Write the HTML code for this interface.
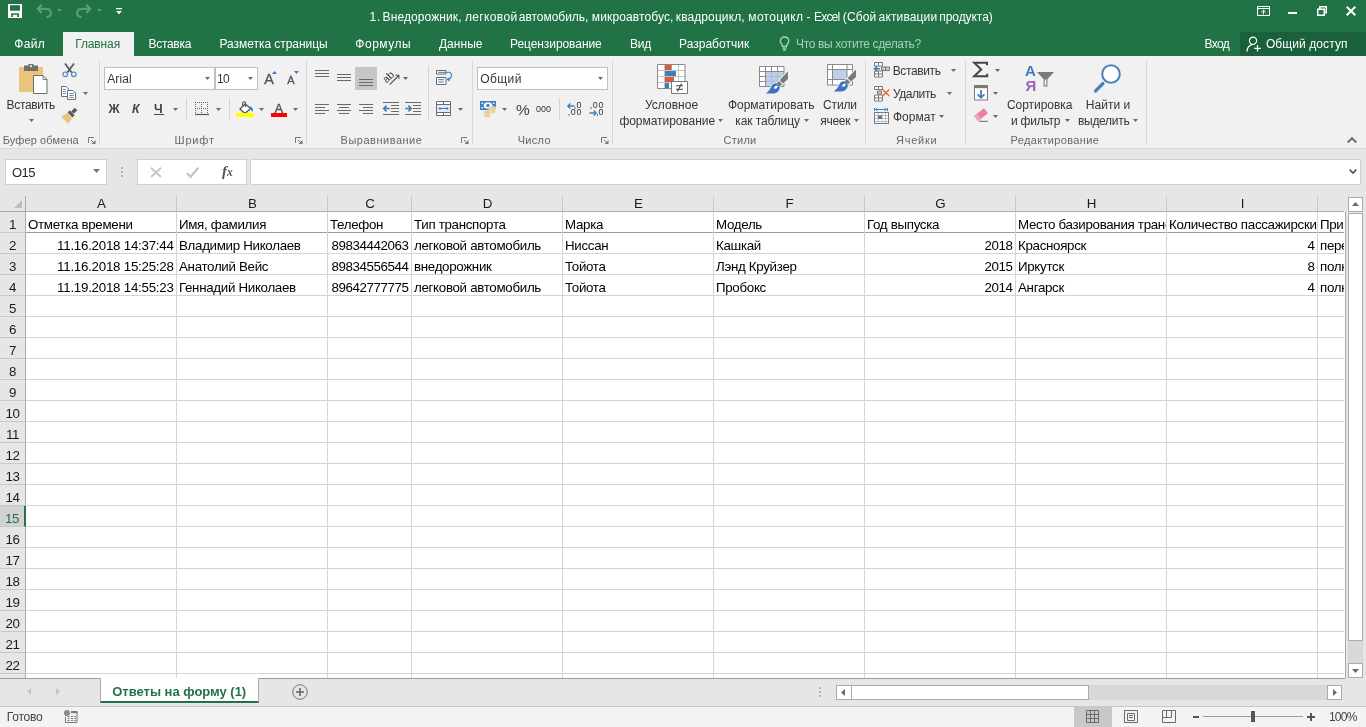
<!DOCTYPE html>
<html lang="ru"><head><meta charset="utf-8"><title>Excel</title>
<style>
*{box-sizing:border-box;margin:0;padding:0}
html,body{width:1366px;height:727px;overflow:hidden;background:#e6e6e6}
body{font-family:"Liberation Sans",sans-serif;font-size:12px;color:#262626;position:relative}
.abs{position:absolute}
#title{position:absolute;left:0;top:0;width:1366px;height:56px;background:#217346}
#title .ttl{position:absolute;left:0;width:1366px;top:9px;text-align:center;color:#fff;font-size:12.4px;line-height:16px;white-space:nowrap;padding-left:0}
.tab{position:absolute;top:32px;height:24px;line-height:24px;color:#fff;font-size:12.6px;white-space:nowrap}
.tab.act{background:#f1f1f1;color:#217346;text-align:center}
#ribbon{position:absolute;left:0;top:56px;width:1366px;height:93px;background:#f1f1f1;border-bottom:1px solid #d9d9d9}
.gl{position:absolute;top:131px;font-size:12px;color:#5e5e5e;white-space:nowrap;line-height:16px;transform:translateX(-50%)}
.gsep{position:absolute;top:60px;width:1px;height:84px;background:#d8d8d8}
.rt{position:absolute;font-size:12.4px;color:#262626;white-space:nowrap;line-height:16px}
.rtc{transform:translateX(-50%);text-align:center}
.dd{position:absolute;width:0;height:0;border-left:3px solid transparent;border-right:3px solid transparent;border-top:3px solid #6a6a6a}
.launch{position:absolute;width:8px;height:8px}
.combo{position:absolute;background:#fff;border:1px solid #c0c0c0;height:23px;font-size:12.4px;line-height:20px;padding-left:3px;color:#262626}
/* formula bar */
.nbox{position:absolute;background:#fff;border:1px solid #d0d0d0}
/* sheet */
#sheet{position:absolute;left:0;top:0;width:1366px;height:727px;pointer-events:none}
.corner{position:absolute;left:0;top:196px;width:26px;height:16px;border-right:1px solid #ababab;border-bottom:1px solid #ababab;background:#e6e6e6}
.corner svg{position:absolute;left:14px;top:4px}
.ch{position:absolute;top:196px;height:16px;background:#e6e6e6;border-right:1px solid #c8c8c8;border-bottom:1px solid #ababab;text-align:center;font-size:13.33px;line-height:16px;color:#1a1a1a;padding-left:1px}
.rh{position:absolute;left:0;width:26px;height:21px;border-right:1px solid #ababab;border-bottom:1px solid #c8c8c8;background:#e6e6e6;text-align:center;font-size:13.33px;line-height:26px;color:#1a1a1a;letter-spacing:-0.4px;overflow:hidden}
.rh.sel{background:#d2d2d2;color:#217346;border-right:2px solid #217346}
.rhb{position:absolute;left:0;width:26px;height:4px;background:#e6e6e6;border-right:1px solid #ababab}
#cells{position:absolute;left:0;top:0;width:1366px;height:727px}
#cells::before{content:"";position:absolute;left:26px;top:212px;width:1319px;height:466px;background:#fff;border-right:1px solid #ababab}
.hl{position:absolute;left:26px;width:1318px;height:1px;background:#d4d4d4}
.hl.fr{background:#9b9b9b}
.vl{position:absolute;top:212px;width:1px;height:466px;background:#d4d4d4}
.c{position:absolute;height:20px;line-height:25px;font-size:13.33px;color:#000;white-space:nowrap;overflow:hidden;padding:0 2px 0 2px;letter-spacing:-0.31px}
.c.n{letter-spacing:-0.43px;padding-right:2.6px}
.c.d{letter-spacing:-0.25px;padding-right:2.4px}
.c.r{text-align:right}
/* bottom */
#tabbar{position:absolute;left:0;top:678px;width:1366px;height:28px;background:#e6e6e6}
#status{position:absolute;left:0;top:706px;width:1366px;height:21px;background:#f3f3f3;border-top:1px solid #c8c8c8}
.t{position:absolute;white-space:nowrap}
.i{position:absolute;overflow:visible}
#app{position:absolute;left:0;top:0;width:1366px;height:727px;overflow:hidden;will-change:transform}

</style></head>
<body>
<div id="app">
<div id="title"></div>
<div class="abs" style="left:63px;top:32px;width:71px;height:24px;background:#f1f1f1"></div>
<div class="abs" style="left:1240px;top:32px;width:126px;height:24px;background:#1a603a"></div>
<div class="t" style="left:369.59px;top:9.00px;font-size:12px;line-height:16px;letter-spacing:0.802px;color:#ffffff;">1.</div>
<div class="t" style="left:382.62px;top:9.00px;font-size:12px;line-height:16px;letter-spacing:0.090px;color:#ffffff;">Внедорожник,</div>
<div class="t" style="left:464.94px;top:9.00px;font-size:12px;line-height:16px;letter-spacing:0.353px;color:#ffffff;">легковой</div>
<div class="t" style="left:518.79px;top:9.00px;font-size:12px;line-height:16px;letter-spacing:-0.032px;color:#ffffff;">автомобиль,</div>
<div class="t" style="left:591.87px;top:9.00px;font-size:12px;line-height:16px;letter-spacing:0.111px;color:#ffffff;">микроавтобус,</div>
<div class="t" style="left:675.79px;top:9.00px;font-size:12px;line-height:16px;letter-spacing:0.098px;color:#ffffff;">квадроцикл,</div>
<div class="t" style="left:748.37px;top:9.00px;font-size:12px;line-height:16px;letter-spacing:0.277px;color:#ffffff;">мотоцикл</div>
<div class="t" style="left:806.47px;top:9.00px;font-size:12px;line-height:16px;letter-spacing:1.270px;color:#ffffff;">-</div>
<div class="t" style="left:814.12px;top:9.00px;font-size:12px;line-height:16px;letter-spacing:-0.839px;color:#ffffff;">Excel</div>
<div class="t" style="left:842.76px;top:9.00px;font-size:12px;line-height:16px;letter-spacing:0.141px;color:#ffffff;">(Сбой</div>
<div class="t" style="left:878.59px;top:9.00px;font-size:12px;line-height:16px;letter-spacing:0.136px;color:#ffffff;">активации</div>
<div class="t" style="left:939.27px;top:9.00px;font-size:12px;line-height:16px;letter-spacing:-0.061px;color:#ffffff;">продукта)</div>
<div class="t" style="left:14.31px;top:36.00px;font-size:12px;line-height:16px;letter-spacing:0.340px;color:#ffffff;">Файл</div>
<div class="t" style="left:148.52px;top:36.00px;font-size:12px;line-height:16px;letter-spacing:-0.298px;color:#ffffff;">Вставка</div>
<div class="t" style="left:219.52px;top:36.00px;font-size:12px;line-height:16px;letter-spacing:-0.045px;color:#ffffff;">Разметка страницы</div>
<div class="t" style="left:355.31px;top:36.00px;font-size:12px;line-height:16px;letter-spacing:0.529px;color:#ffffff;">Формулы</div>
<div class="t" style="left:438.91px;top:36.00px;font-size:12px;line-height:16px;letter-spacing:0.054px;color:#ffffff;">Данные</div>
<div class="t" style="left:510.02px;top:36.00px;font-size:12px;line-height:16px;letter-spacing:-0.072px;color:#ffffff;">Рецензирование</div>
<div class="t" style="left:630.02px;top:36.00px;font-size:12px;line-height:16px;letter-spacing:-0.260px;color:#ffffff;">Вид</div>
<div class="t" style="left:679.02px;top:36.00px;font-size:12px;line-height:16px;letter-spacing:0.015px;color:#ffffff;">Разработчик</div>
<div class="t" style="left:1204.52px;top:36.00px;font-size:12px;line-height:16px;letter-spacing:-0.663px;color:#ffffff;">Вход</div>
<div class="t" style="left:1265.93px;top:36.00px;font-size:12px;line-height:16px;letter-spacing:0.083px;color:#ffffff;">Общий доступ</div>
<div class="t" style="left:75.22px;top:36.00px;font-size:12px;line-height:16px;letter-spacing:-0.122px;color:#217346;">Главная</div>
<div class="t" style="left:796.06px;top:36.00px;font-size:12px;line-height:16px;letter-spacing:-0.362px;color:#a6d0b9;">Что вы хотите сделать?</div>
<svg class="i" style="left:8px;top:4px" width="14" height="14" viewBox="0 0 14 14"><path d="M0 0H14V14H0Z" fill="#fff"/><path d="M2 1.2H12V6.7H2Z" fill="#217346"/><path d="M3.2 9.3H11V13H3.2Z" fill="#217346"/><path d="M5 10.8H9.2V13H5Z" fill="#fff"/></svg>
<svg class="i" style="left:36px;top:3px" width="16" height="15" viewBox="0 0 16 15"><path d="M5.7 1.7L1.7 5.7L5.7 9.7M2 5.7H9C13 5.7 15 7.7 15 10C15 12.2 13.5 13.7 10.5 14.2" fill="none" stroke="#5c9f7b" stroke-width="2"/></svg>
<svg class="i" style="left:57px;top:9px" width="5" height="3" viewBox="0 0 5 3"><path d="M0 0H5L2.5 3Z" fill="#5c9f7b"/></svg>
<svg class="i" style="left:76px;top:3px" width="16" height="15" viewBox="0 0 16 15"><path d="M10.3 1.7L14.3 5.7L10.3 9.7M14 5.7H7C3 5.7 1 7.7 1 10C1 12.2 2.5 13.7 5.5 14.2" fill="none" stroke="#5c9f7b" stroke-width="2"/></svg>
<svg class="i" style="left:97px;top:9px" width="5" height="3" viewBox="0 0 5 3"><path d="M0 0H5L2.5 3Z" fill="#5c9f7b"/></svg>
<svg class="i" style="left:116px;top:8px" width="6" height="7" viewBox="0 0 6 7"><path d="M0 0H6V1.3H0Z" fill="#fff"/><path d="M0 3H6L3 6.2Z" fill="#fff"/></svg>
<svg class="i" style="left:779px;top:36px" width="11" height="15" viewBox="0 0 11 15"><path d="M5.5 1C3 1 1.3 2.8 1.3 5C1.3 6.6 2.3 7.6 3 8.6C3.4 9.2 3.5 9.8 3.5 10.5H7.5C7.5 9.8 7.6 9.2 8 8.6C8.7 7.6 9.7 6.6 9.7 5C9.7 2.8 8 1 5.5 1Z" fill="none" stroke="#a6d0b9" stroke-width="1.4"/><path d="M3.4 12.2H7.6M3.9 14H7.1" stroke="#a6d0b9" stroke-width="1.3"/></svg>
<svg class="i" style="left:1257px;top:6px" width="13" height="10" viewBox="0 0 13 10"><path d="M0.5 0.5H12.5V9.5H0.5Z" fill="none" stroke="#fff" stroke-width="1"/><path d="M0.5 2.5H12.5" stroke="#fff" stroke-width="1"/><path d="M6.5 8.5V4.5M4.3 6.3L6.5 4.2L8.7 6.3" fill="none" stroke="#fff" stroke-width="1"/></svg>
<div class="abs" style="left:1288px;top:12px;width:9px;height:2px;background:#fff"></div>
<svg class="i" style="left:1317px;top:6px" width="10" height="10" viewBox="0 0 10 10"><path d="M0.75 3.25H7.25V9.25H0.75Z" fill="none" stroke="#fff" stroke-width="1.5"/><path d="M2.75 3V0.75H9.25V6.75H7.5" fill="none" stroke="#fff" stroke-width="1.5"/></svg>
<svg class="i" style="left:1346px;top:6px" width="10" height="10" viewBox="0 0 10 10"><path d="M0.7 0.7L9.3 9.3M9.3 0.7L0.7 9.3" stroke="#fff" stroke-width="2"/></svg>
<svg class="i" style="left:1246px;top:36px" width="16" height="16" viewBox="0 0 16 16"><circle cx="7" cy="4.8" r="3.6" fill="none" stroke="#fff" stroke-width="1.2"/><path d="M1 15.5C1.3 11.5 3.6 9.3 6 8.7" fill="none" stroke="#fff" stroke-width="1.2"/><path d="M11.5 9V15.5M8.2 12.3H14.8" stroke="#fff" stroke-width="1.2"/></svg>
<div id="ribbon"></div>
<div class="t" style="left:2.70px;top:132.00px;font-size:11px;line-height:16px;letter-spacing:0.114px;color:#666666;">Буфер обмена</div>
<div class="t" style="left:174.60px;top:132.00px;font-size:11px;line-height:16px;letter-spacing:0.790px;color:#666666;">Шрифт</div>
<div class="t" style="left:340.60px;top:132.00px;font-size:11px;line-height:16px;letter-spacing:0.505px;color:#666666;">Выравнивание</div>
<div class="t" style="left:517.64px;top:132.00px;font-size:11px;line-height:16px;letter-spacing:0.327px;color:#666666;">Число</div>
<div class="t" style="left:723.44px;top:132.00px;font-size:11px;line-height:16px;letter-spacing:0.283px;color:#666666;">Стили</div>
<div class="t" style="left:895.98px;top:132.00px;font-size:11px;line-height:16px;letter-spacing:0.777px;color:#666666;">Ячейки</div>
<div class="t" style="left:1010.60px;top:132.00px;font-size:11px;line-height:16px;letter-spacing:0.336px;color:#666666;">Редактирование</div>
<div class="gsep" style="left:99px"></div>
<div class="gsep" style="left:306px"></div>
<div class="gsep" style="left:472px"></div>
<div class="gsep" style="left:612px"></div>
<div class="gsep" style="left:865px"></div>
<div class="gsep" style="left:965px"></div>
<div class="gsep" style="left:1146px"></div>
<svg class="i" style="left:88px;top:137px" width="8" height="7" viewBox="0 0 8 7"><path d="M0.5 6V0.5H6" fill="none" stroke="#777" stroke-width="1"/><path d="M3 3L6.5 6.5" stroke="#777" stroke-width="1"/><path d="M7.5 3V7H3.5Z" fill="#777"/></svg>
<svg class="i" style="left:295px;top:137px" width="8" height="7" viewBox="0 0 8 7"><path d="M0.5 6V0.5H6" fill="none" stroke="#777" stroke-width="1"/><path d="M3 3L6.5 6.5" stroke="#777" stroke-width="1"/><path d="M7.5 3V7H3.5Z" fill="#777"/></svg>
<svg class="i" style="left:461px;top:137px" width="8" height="7" viewBox="0 0 8 7"><path d="M0.5 6V0.5H6" fill="none" stroke="#777" stroke-width="1"/><path d="M3 3L6.5 6.5" stroke="#777" stroke-width="1"/><path d="M7.5 3V7H3.5Z" fill="#777"/></svg>
<svg class="i" style="left:601px;top:137px" width="8" height="7" viewBox="0 0 8 7"><path d="M0.5 6V0.5H6" fill="none" stroke="#777" stroke-width="1"/><path d="M3 3L6.5 6.5" stroke="#777" stroke-width="1"/><path d="M7.5 3V7H3.5Z" fill="#777"/></svg>
<svg class="i" style="left:1347px;top:137px" width="10" height="6" viewBox="0 0 10 6"><path d="M0.7 5.5L5 1.2L9.3 5.5" fill="none" stroke="#6f6f6f" stroke-width="2"/></svg>
<svg class="i" style="left:19px;top:64px" width="29" height="30" viewBox="0 0 29 30"><path d="M0 3H24V28H0Z" fill="#eac47a"/><path d="M5 1.5H9.5V0H14.5V1.5H19V7H5Z" fill="#6f6f6f"/><circle cx="12" cy="2.2" r="1.1" fill="#f1f1f1"/><path d="M14.5 11.5H24L28 15.5V29.5H14.5Z" fill="#fff" stroke="#6f6f6f" stroke-width="1"/><path d="M24 11.5V15.5H28" fill="none" stroke="#6f6f6f" stroke-width="0.9"/></svg>
<div class="t" style="left:6.52px;top:97.00px;font-size:12px;line-height:16px;letter-spacing:-0.318px;color:#363636;">Вставить</div>
<svg class="i" style="left:29px;top:119px" width="5" height="3" viewBox="0 0 5 3"><path d="M0 0H5L2.5 3Z" fill="#6a6a6a"/></svg>
<svg class="i" style="left:61.5px;top:62.5px" width="15" height="14" viewBox="0 0 15 14"><path d="M3 0.5L9.6 9.5M12 0.5L5.4 9.5" stroke="#5a5a5a" stroke-width="1.8" fill="none"/><circle cx="3.2" cy="11.3" r="2.3" fill="none" stroke="#4a86d0" stroke-width="1.2"/><circle cx="11.8" cy="11.3" r="2.3" fill="none" stroke="#4a86d0" stroke-width="1.2"/></svg>
<svg class="i" style="left:61px;top:86px" width="15" height="14" viewBox="0 0 15 14"><path d="M0.5 0.5H5L7.5 3V10.5H0.5Z" fill="#fff" stroke="#6f6f6f"/><path d="M2 3.5H5M2 5.5H5M2 7.5H5" stroke="#4a86d0" stroke-width="0.9"/><path d="M6.5 4.5H12L14.5 7V13.5H6.5Z" fill="#fff" stroke="#6f6f6f"/><path d="M8.2 7.5H12.8M8.2 9.5H12.8M8.2 11.5H12.8" stroke="#4a86d0" stroke-width="0.9"/></svg>
<svg class="i" style="left:83px;top:92px" width="5" height="3" viewBox="0 0 5 3"><path d="M0 0H5L2.5 3Z" fill="#6a6a6a"/></svg>
<svg class="i" style="left:61px;top:109px" width="16" height="14" viewBox="0 0 16 14"><g transform="rotate(45 8 7)"><path d="M6.2 -3H9.8V2H6.2Z" fill="#5a5a5a"/><path d="M4.5 2.5H11.5V5.5H4.5Z" fill="#5a5a5a"/><path d="M4.5 6.3H11.5L13 13H3Z" fill="#eac47a"/></g></svg>
<div class="combo" style="left:104px;top:67px;width:111px"></div>
<div class="combo" style="left:215px;top:67px;width:43px"></div>
<div class="t" style="left:107.28px;top:71.00px;font-size:12px;line-height:16px;letter-spacing:0.105px;color:#363636;">Arial</div>
<div class="t" style="left:216.99px;top:71.00px;font-size:12px;line-height:16px;letter-spacing:-0.665px;color:#363636;">10</div>
<svg class="i" style="left:205px;top:77px" width="5" height="3" viewBox="0 0 5 3"><path d="M0 0H5L2.5 3Z" fill="#6a6a6a"/></svg>
<svg class="i" style="left:248px;top:77px" width="5" height="3" viewBox="0 0 5 3"><path d="M0 0H5L2.5 3Z" fill="#6a6a6a"/></svg>
<div class="t" style="left:264.17px;top:71.00px;font-size:14.3px;line-height:16px;letter-spacing:-0.082px;color:#555;-webkit-text-stroke:0.35px #555;">A</div>
<svg class="i" style="left:272px;top:71px" width="5" height="3" viewBox="0 0 5 3"><path d="M0 3H5L2.5 0Z" fill="#3d7ebf"/></svg>
<div class="t" style="left:287.28px;top:72.00px;font-size:11px;line-height:16px;letter-spacing:-0.094px;color:#555;-webkit-text-stroke:0.35px #555;">A</div>
<svg class="i" style="left:294px;top:71px" width="5" height="3" viewBox="0 0 5 3"><path d="M0 0H5L2.5 3Z" fill="#3d7ebf"/></svg>
<div class="t" style="left:108.54px;top:101.00px;font-size:12.3px;line-height:16px;letter-spacing:1.787px;color:#444;font-weight:bold;">Ж</div>
<div class="t" style="left:131.98px;top:101.00px;font-size:12.3px;line-height:16px;letter-spacing:0.452px;color:#444;font-weight:bold;font-style:italic;">К</div>
<div class="t" style="left:154.04px;top:101.00px;font-size:12.3px;line-height:16px;letter-spacing:0.747px;color:#444;font-weight:bold;">Ч</div>
<div class="abs" style="left:154px;top:114px;width:10px;height:1px;background:#444"></div>
<svg class="i" style="left:173px;top:108px" width="5" height="3" viewBox="0 0 5 3"><path d="M0 0H5L2.5 3Z" fill="#6a6a6a"/></svg>
<div class="abs" style="left:186px;top:98px;width:1px;height:22px;background:#d4d4d4"></div>
<svg class="i" style="left:195px;top:102px" width="14" height="13" viewBox="0 0 14 13"><path shape-rendering="crispEdges" d="M0 0.5H13M0 6.5H13M0.5 0V12M6.5 0V12M12.5 0V12" stroke="#666" stroke-width="1" stroke-dasharray="1 1" fill="none"/><path d="M0 12.5H14" stroke="#555" stroke-width="1.2"/></svg>
<svg class="i" style="left:216px;top:108px" width="5" height="3" viewBox="0 0 5 3"><path d="M0 0H5L2.5 3Z" fill="#6a6a6a"/></svg>
<div class="abs" style="left:229px;top:98px;width:1px;height:22px;background:#d4d4d4"></div>
<svg class="i" style="left:239px;top:100.5px" width="15" height="13" viewBox="0 0 15 13"><path d="M6.3 3L0.9 8L5.9 12.6L11.6 7.6Z" fill="#fff" stroke="#555" stroke-width="1.3" stroke-linejoin="round"/><path d="M6.4 6V2C6.4 0.3 3.6 0.3 3.6 2V5" fill="none" stroke="#555" stroke-width="1.1"/><path d="M10.6 5.2C13.2 5.6 14.6 8 14 11C13 9.6 12 8.7 10.4 8.2Z" fill="#3d7ebf"/></svg>
<div class="abs" style="left:236px;top:113px;width:18px;height:4px;background:#ffff00"></div>
<svg class="i" style="left:259px;top:108px" width="5" height="3" viewBox="0 0 5 3"><path d="M0 0H5L2.5 3Z" fill="#6a6a6a"/></svg>
<div class="t" style="left:274.47px;top:100.50px;font-size:13px;line-height:16px;letter-spacing:0.780px;color:#555;-webkit-text-stroke:0.35px #555;">A</div>
<div class="abs" style="left:271px;top:113px;width:16px;height:4px;background:#ff0000"></div>
<svg class="i" style="left:293px;top:108px" width="5" height="3" viewBox="0 0 5 3"><path d="M0 0H5L2.5 3Z" fill="#6a6a6a"/></svg>
<div class="abs" style="left:315px;top:70px;width:14px;height:1px;background:#6a6a6a"></div><div class="abs" style="left:315px;top:73px;width:14px;height:1px;background:#6a6a6a"></div><div class="abs" style="left:315px;top:76px;width:14px;height:1px;background:#6a6a6a"></div>
<div class="abs" style="left:337px;top:74px;width:14px;height:1px;background:#6a6a6a"></div><div class="abs" style="left:337px;top:77px;width:14px;height:1px;background:#6a6a6a"></div><div class="abs" style="left:337px;top:80px;width:14px;height:1px;background:#6a6a6a"></div>
<div class="abs" style="left:355px;top:67px;width:22px;height:23px;background:#c6c6c6"></div>
<div class="abs" style="left:359px;top:79px;width:14px;height:1px;background:#6a6a6a"></div><div class="abs" style="left:359px;top:82px;width:14px;height:1px;background:#6a6a6a"></div><div class="abs" style="left:359px;top:85px;width:14px;height:1px;background:#6a6a6a"></div>
<svg class="i" style="left:383px;top:70px" width="17" height="15" viewBox="0 0 17 15"><text x="0" y="0" transform="translate(3.6 13.6) rotate(-45)" font-family="Liberation Sans, sans-serif" font-size="10.5" fill="#3a3a3a">ab</text><path d="M6.6 14.6L15.7 5.5M12.3 5.3H15.9V8.9" fill="none" stroke="#555" stroke-width="1.1"/></svg>
<svg class="i" style="left:403px;top:77px" width="5" height="3" viewBox="0 0 5 3"><path d="M0 0H5L2.5 3Z" fill="#6a6a6a"/></svg>
<div class="abs" style="left:428px;top:66px;width:1px;height:54px;background:#d4d4d4"></div>
<svg class="i" style="left:436px;top:70px" width="17" height="15" viewBox="0 0 17 15"><path d="M0.5 0.5H10V4H0.5Z" fill="#fff" stroke="#6a6a6a"/><path d="M0.5 7.5H10V14.5H0.5Z" fill="#fff" stroke="#6a6a6a"/><path d="M2.3 2.3H13.8" stroke="#3d7ebf" stroke-width="1"/><path d="M2.3 9.7H8M2.3 12H8" stroke="#3d7ebf" stroke-width="1"/><path d="M13.5 2.3C16.3 3.3 16.3 8.8 12 9.4" fill="none" stroke="#3d7ebf" stroke-width="1.1"/><path d="M10.4 9.5L13.4 7.2L13.6 11.6Z" fill="#3d7ebf"/></svg>
<div class="abs" style="left:315px;top:104px;width:14px;height:1px;background:#6a6a6a"></div><div class="abs" style="left:315px;top:107px;width:10px;height:1px;background:#6a6a6a"></div><div class="abs" style="left:315px;top:110px;width:14px;height:1px;background:#6a6a6a"></div><div class="abs" style="left:315px;top:113px;width:10px;height:1px;background:#6a6a6a"></div>
<div class="abs" style="left:337px;top:104px;width:14px;height:1px;background:#6a6a6a"></div><div class="abs" style="left:339px;top:107px;width:10px;height:1px;background:#6a6a6a"></div><div class="abs" style="left:337px;top:110px;width:14px;height:1px;background:#6a6a6a"></div><div class="abs" style="left:339px;top:113px;width:10px;height:1px;background:#6a6a6a"></div>
<div class="abs" style="left:359px;top:104px;width:14px;height:1px;background:#6a6a6a"></div><div class="abs" style="left:363px;top:107px;width:10px;height:1px;background:#6a6a6a"></div><div class="abs" style="left:359px;top:110px;width:14px;height:1px;background:#6a6a6a"></div><div class="abs" style="left:363px;top:113px;width:10px;height:1px;background:#6a6a6a"></div>
<div class="abs" style="left:383px;top:102px;width:16px;height:1px;background:#6a6a6a"></div><div class="abs" style="left:383px;top:114px;width:16px;height:1px;background:#6a6a6a"></div>
<div class="abs" style="left:391px;top:105px;width:8px;height:1px;background:#6a6a6a"></div><div class="abs" style="left:391px;top:108px;width:8px;height:1px;background:#6a6a6a"></div><div class="abs" style="left:391px;top:111px;width:8px;height:1px;background:#6a6a6a"></div>
<svg class="i" style="left:383px;top:105px" width="7" height="7" viewBox="0 0 7 7"><path d="M6.8 3.5H1.2M3.6 0.6L0.8 3.5L3.6 6.4" fill="none" stroke="#3d7ebf" stroke-width="1.7"/></svg>
<div class="abs" style="left:405px;top:102px;width:16px;height:1px;background:#6a6a6a"></div><div class="abs" style="left:405px;top:114px;width:16px;height:1px;background:#6a6a6a"></div>
<div class="abs" style="left:413px;top:105px;width:8px;height:1px;background:#6a6a6a"></div><div class="abs" style="left:413px;top:108px;width:8px;height:1px;background:#6a6a6a"></div><div class="abs" style="left:413px;top:111px;width:8px;height:1px;background:#6a6a6a"></div>
<svg class="i" style="left:405px;top:105px" width="7" height="7" viewBox="0 0 7 7"><path d="M0.2 3.5H5.8M3.4 0.6L6.2 3.5L3.4 6.4" fill="none" stroke="#3d7ebf" stroke-width="1.7"/></svg>
<svg class="i" style="left:436px;top:101px" width="15" height="15" viewBox="0 0 15 15"><path d="M0.5 0.5H14.5V14.5H0.5Z" fill="#fff" stroke="#6a6a6a"/><path d="M0.5 3.5H14.5M0.5 11.5H14.5M7.5 0.5V3.5M7.5 11.5V14.5" stroke="#6a6a6a" fill="none"/><path d="M1 4H14V11H1Z" fill="#e3edf8"/><path d="M3 7.5H12M4.5 6L3 7.5L4.5 9M10.5 6L12 7.5L10.5 9" fill="none" stroke="#3d7ebf" stroke-width="1"/></svg>
<svg class="i" style="left:458px;top:108px" width="5" height="3" viewBox="0 0 5 3"><path d="M0 0H5L2.5 3Z" fill="#6a6a6a"/></svg>
<div class="combo" style="left:477px;top:67px;width:131px"></div>
<div class="t" style="left:480.13px;top:71.00px;font-size:12px;line-height:16px;letter-spacing:0.454px;color:#363636;">Общий</div>
<svg class="i" style="left:598px;top:77px" width="5" height="3" viewBox="0 0 5 3"><path d="M0 0H5L2.5 3Z" fill="#6a6a6a"/></svg>
<svg class="i" style="left:480px;top:101px" width="17" height="17" viewBox="0 0 17 17"><path d="M0 0H16V9H0Z" fill="#3d7ebf"/><path d="M1.5 1.5H3V3H1.5ZM13 1.5H14.5V3H13ZM1.5 6H3V7.5H1.5Z" fill="#fff"/><ellipse cx="8" cy="4.5" rx="4.3" ry="3.2" fill="#fff"/><circle cx="8" cy="4.5" r="1.7" fill="#3d7ebf"/><g fill="#eac47a" stroke="#f1f1f1" stroke-width="0.6"><ellipse cx="12.5" cy="10.8" rx="3.6" ry="1.4"/><ellipse cx="12.5" cy="8.8" rx="3.6" ry="1.4"/><ellipse cx="12.5" cy="6.8" rx="3.6" ry="1.4"/><ellipse cx="7.3" cy="15" rx="3.6" ry="1.4"/><ellipse cx="7.3" cy="13" rx="3.6" ry="1.4"/><ellipse cx="7.3" cy="11" rx="3.6" ry="1.4"/></g></svg>
<svg class="i" style="left:502px;top:108px" width="5" height="3" viewBox="0 0 5 3"><path d="M0 0H5L2.5 3Z" fill="#6a6a6a"/></svg>
<div class="t" style="left:516.05px;top:101.50px;font-size:15.5px;line-height:16px;letter-spacing:-0.477px;color:#444;">%</div>
<div class="t" style="left:536.45px;top:100.50px;font-size:9.6px;line-height:16px;color:#333;transform:scaleX(0.9366);transform-origin:0 0;">000</div>
<div class="abs" style="left:559px;top:98px;width:1px;height:22px;background:#d4d4d4"></div>
<svg class="i" style="left:567px;top:103px" width="8" height="6" viewBox="0 0 8 6"><path d="M7.5 3H1M3.3 0.5L0.8 3L3.3 5.5" fill="none" stroke="#3d7ebf" stroke-width="1.3"/></svg>
<div class="t" style="left:573.71px;top:96.50px;font-size:8.8px;line-height:16px;letter-spacing:0.295px;color:#333;">,0</div>
<div class="t" style="left:567.71px;top:103.50px;font-size:8.8px;line-height:16px;letter-spacing:0.701px;color:#333;">,00</div>
<div class="t" style="left:589.71px;top:96.50px;font-size:8.8px;line-height:16px;letter-spacing:0.701px;color:#333;">,00</div>
<svg class="i" style="left:589px;top:109.5px" width="8" height="6" viewBox="0 0 8 6"><path d="M0.5 3H7M4.7 0.5L7.2 3L4.7 5.5" fill="none" stroke="#3d7ebf" stroke-width="1.3"/></svg>
<div class="t" style="left:596.21px;top:103.50px;font-size:8.8px;line-height:16px;letter-spacing:-0.205px;color:#333;">,0</div>
<svg class="i" style="left:657px;top:64px" width="31" height="30" viewBox="0 0 31 30"><path d="M0.5 0.5H28V24.5H0.5Z" fill="#fff"/><path d="M7.5 0.5V24.5M14.5 0.5V24.5M21.5 0.5V24.5M0.5 6.5H28M0.5 12.5H28M0.5 18.5H28" stroke="#c4c4c4" stroke-width="1" fill="none"/><path d="M0.5 0.5H28V24.5H0.5Z" fill="none" stroke="#8a8a8a" stroke-width="1"/><path d="M8 1H14.5V6H8Z" fill="#d9593a"/><path d="M8 7H19V12H8Z" fill="#3d7ebf"/><path d="M8 13H17V18H8Z" fill="#d9593a"/><path d="M8 19H12V24H8Z" fill="#3d7ebf"/><path d="M14.5 17.5H30.5V29.5H14.5Z" fill="#fff" stroke="#7a7a7a"/><path d="M19 21.7H26M19 25.3H26M24.6 19.5L20.4 27.5" stroke="#444" stroke-width="1.1" fill="none"/></svg>
<div class="t" style="left:644.88px;top:97.00px;font-size:12px;line-height:16px;letter-spacing:0.030px;color:#363636;">Условное</div>
<div class="t" style="left:619.40px;top:113.00px;font-size:12px;line-height:16px;letter-spacing:-0.047px;color:#363636;">форматирование</div>
<svg class="i" style="left:718px;top:119px" width="5" height="3" viewBox="0 0 5 3"><path d="M0 0H5L2.5 3Z" fill="#6a6a6a"/></svg>
<svg class="i" style="left:759px;top:66px" width="32" height="29" viewBox="0 0 32 29"><path d="M0.5 0.5H25V20.5H0.5Z" fill="#fff"/><path d="M6.5 5.5H25V20.5H6.5Z" fill="#bdd0e9"/><path d="M6.5 0.5V20.5M12.5 0.5V20.5M18.5 0.5V20.5M0.5 5.5H25M0.5 10.5H25M0.5 15.5H25" stroke="#a9bbd6" stroke-width="1" fill="none"/><path d="M0.5 0.5H25V20.5H0.5Z" fill="none" stroke="#8a8a8a" stroke-width="1"/><path d="M6.5 0.5V20.5M0.5 5.5H25M12.5 0.5V5.5M18.5 0.5V5.5M0.5 10.5H6.5M0.5 15.5H6.5" stroke="#8a8a8a" fill="none"/><g transform="translate(6.7 27.4)"><path d="M11.1 -9.9L22.1 -21.7V-14.5L13.9 -7.1Z" fill="#7a7a7a" stroke="#f1f1f1" stroke-width="2" paint-order="stroke"/><path d="M11.3 -9.7C9.2 -10.7 7 -9.6 6 -7.4C4.8 -4.8 2.5 -1.4 0 0H8.6C12.3 -0.2 15.2 -5 13.7 -7.3Z" fill="#3a75c4" stroke="#f1f1f1" stroke-width="1.6" paint-order="stroke"/><path d="M11.1 -9.9L22.1 -21.7V-14.5L13.9 -7.1Z" fill="#7a7a7a"/><path d="M13.4 -13.1L16.9 -9.5" stroke="#f1f1f1" stroke-width="1.1"/><ellipse cx="10.2" cy="-6.2" rx="2" ry="1.25" transform="rotate(-38 10.2 -6.2)" fill="#fff"/></g></svg>
<div class="t" style="left:727.91px;top:97.00px;font-size:12px;line-height:16px;letter-spacing:-0.038px;color:#363636;">Форматировать</div>
<div class="t" style="left:735.29px;top:113.00px;font-size:12px;line-height:16px;letter-spacing:-0.100px;color:#363636;">как таблицу</div>
<svg class="i" style="left:804px;top:119px" width="5" height="3" viewBox="0 0 5 3"><path d="M0 0H5L2.5 3Z" fill="#6a6a6a"/></svg>
<svg class="i" style="left:827px;top:64px" width="32" height="29" viewBox="0 0 32 29"><path d="M0.5 0.5H25.5V21H0.5Z" fill="#fff"/><path d="M5.5 5.5H20V15.5H5.5Z" fill="#bdd0e9"/><path d="M5.5 0.5V21M20 0.5V21M0.5 5.5H25.5M0.5 15.5H25.5" stroke="#8a8a8a" stroke-width="1" fill="none"/><path d="M0.5 0.5H25.5V21H0.5Z" fill="none" stroke="#8a8a8a" stroke-width="1"/><g transform="translate(6.7 27.4)"><path d="M11.1 -9.9L22.1 -21.7V-14.5L13.9 -7.1Z" fill="#7a7a7a" stroke="#f1f1f1" stroke-width="2" paint-order="stroke"/><path d="M11.3 -9.7C9.2 -10.7 7 -9.6 6 -7.4C4.8 -4.8 2.5 -1.4 0 0H8.6C12.3 -0.2 15.2 -5 13.7 -7.3Z" fill="#3a75c4" stroke="#f1f1f1" stroke-width="1.6" paint-order="stroke"/><path d="M11.1 -9.9L22.1 -21.7V-14.5L13.9 -7.1Z" fill="#7a7a7a"/><path d="M13.4 -13.1L16.9 -9.5" stroke="#f1f1f1" stroke-width="1.1"/><ellipse cx="10.2" cy="-6.2" rx="2" ry="1.25" transform="rotate(-38 10.2 -6.2)" fill="#fff"/></g></svg>
<div class="t" style="left:822.99px;top:97.00px;font-size:12px;line-height:16px;letter-spacing:-0.132px;color:#363636;">Стили</div>
<div class="t" style="left:820.20px;top:113.00px;font-size:12px;line-height:16px;letter-spacing:-0.252px;color:#363636;">ячеек</div>
<svg class="i" style="left:854px;top:119px" width="5" height="3" viewBox="0 0 5 3"><path d="M0 0H5L2.5 3Z" fill="#6a6a6a"/></svg>
<svg class="i" style="left:874px;top:62px" width="16" height="16" viewBox="0 0 16 16"><path d="M0.5 0.5H8.5V4H0.5ZM4.5 0.5V4M0.5 9H8.5V15H0.5ZM0.5 12H8.5M4.5 9V15" fill="#fff" stroke="#7a7a7a"/><path d="M7.5 5H15.5V8.5H7.5Z" fill="#c8c8c8" stroke="#7a7a7a"/><path d="M11.5 5V8.5" stroke="#7a7a7a"/><path d="M6 6.8H0.8M3.2 4.2L0.6 6.8L3.2 9.4" fill="none" stroke="#3d7ebf" stroke-width="1.5"/></svg>
<div class="t" style="left:892.72px;top:63.00px;font-size:12px;line-height:16px;letter-spacing:-0.375px;color:#363636;">Вставить</div>
<svg class="i" style="left:951px;top:69px" width="5" height="3" viewBox="0 0 5 3"><path d="M0 0H5L2.5 3Z" fill="#6a6a6a"/></svg>
<svg class="i" style="left:874px;top:85.5px" width="16" height="16" viewBox="0 0 16 16"><path d="M0.5 0.5H8.5V3.5H0.5ZM4.5 0.5V3.5M0.5 9H8.5V15H0.5ZM0.5 12H8.5M4.5 9V15" fill="#fff" stroke="#7a7a7a"/><path d="M3.5 5H7.5V8H3.5Z" fill="#c8c8c8" stroke="#7a7a7a"/><path d="M8.5 3.5L15.3 10M15.3 3.5L8.5 10" stroke="#e0633a" stroke-width="1.4" fill="none"/></svg>
<div class="t" style="left:892.88px;top:86.00px;font-size:12px;line-height:16px;letter-spacing:-0.406px;color:#363636;">Удалить</div>
<svg class="i" style="left:947px;top:92px" width="5" height="3" viewBox="0 0 5 3"><path d="M0 0H5L2.5 3Z" fill="#6a6a6a"/></svg>
<svg class="i" style="left:874px;top:108px" width="15" height="16" viewBox="0 0 15 16"><path d="M0.5 0V3M13.5 0V3M1.5 1.5H12.5M3.3 0.2L1.6 1.5L3.3 2.8M10.7 0.2L12.4 1.5L10.7 2.8" stroke="#3d7ebf" stroke-width="1" fill="none"/><path d="M0.5 4.5H14.5V15.5H0.5Z" fill="#fff" stroke="#7a7a7a"/><path d="M0.5 7.5H14.5M0.5 10.5H14.5M0.5 13.5H14.5M4 4.5V15.5M8 4.5V15.5M11.5 4.5V15.5" stroke="#b0b0b0" stroke-width="0.8" fill="none"/><path d="M4 7.5H8V11H4Z" fill="#3d7ebf"/><path d="M0.5 4.5H14.5V15.5H0.5Z" fill="none" stroke="#7a7a7a"/></svg>
<div class="t" style="left:893.01px;top:109.00px;font-size:12px;line-height:16px;letter-spacing:0.001px;color:#363636;">Формат</div>
<svg class="i" style="left:939px;top:115px" width="5" height="3" viewBox="0 0 5 3"><path d="M0 0H5L2.5 3Z" fill="#6a6a6a"/></svg>
<svg class="i" style="left:973px;top:62px" width="16" height="15" viewBox="0 0 16 15"><path d="M14 3.2V0.8H1.2L8.2 7.5L1.2 14.2H14.2V11.8" fill="none" stroke="#444" stroke-width="2"/></svg>
<svg class="i" style="left:995px;top:69px" width="5" height="3" viewBox="0 0 5 3"><path d="M0 0H5L2.5 3Z" fill="#6a6a6a"/></svg>
<svg class="i" style="left:974px;top:85.3px" width="14" height="16" viewBox="0 0 14 16"><path d="M0.5 0.5H13.5V15H0.5Z" fill="#fff" stroke="#7a7a7a"/><path d="M0.5 0H13.5V3.2H0.5Z" fill="#7a7a7a"/><path d="M7 5V13M3.6 9.4L7 12.8L10.4 9.4" fill="none" stroke="#3d7ebf" stroke-width="1.8"/></svg>
<svg class="i" style="left:993px;top:92px" width="5" height="3" viewBox="0 0 5 3"><path d="M0 0H5L2.5 3Z" fill="#6a6a6a"/></svg>
<svg class="i" style="left:974px;top:109.2px" width="15" height="13" viewBox="0 0 15 13"><g transform="rotate(-38 7 6)"><path d="M1 2.5H13.5V9H1Z" fill="#e8829a"/><path d="M1 2.5H5V9H1Z" fill="#f0a6b6"/></g><path d="M5 12.3H14" stroke="#6a6a6a" stroke-width="1"/></svg>
<svg class="i" style="left:993px;top:115px" width="5" height="3" viewBox="0 0 5 3"><path d="M0 0H5L2.5 3Z" fill="#6a6a6a"/></svg>
<div class="t" style="left:1024.93px;top:63.00px;font-size:15px;line-height:16px;letter-spacing:0.537px;color:#3d7ebf;font-weight:bold;">А</div>
<div class="t" style="left:1025.54px;top:77.50px;font-size:15px;line-height:16px;letter-spacing:0.079px;color:#9a63b5;font-weight:bold;">Я</div>
<svg class="i" style="left:1037px;top:72px" width="17" height="15" viewBox="0 0 17 15"><path d="M0 0H17L10.4 7.3V14.5H6.6V7.3Z" fill="#7a7a7a"/><path d="M7.7 7.6V13.4H9.3V7.6Z" fill="#fff"/></svg>
<div class="t" style="left:1006.89px;top:97.00px;font-size:12px;line-height:16px;letter-spacing:-0.028px;color:#363636;">Сортировка</div>
<div class="t" style="left:1011.07px;top:113.00px;font-size:12px;line-height:16px;letter-spacing:-0.243px;color:#363636;">и фильтр</div>
<svg class="i" style="left:1065px;top:119px" width="5" height="3" viewBox="0 0 5 3"><path d="M0 0H5L2.5 3Z" fill="#6a6a6a"/></svg>
<svg class="i" style="left:1094px;top:64px" width="27" height="28" viewBox="0 0 27 28"><path d="M9 19.5L1.5 27" stroke="#4a80bb" stroke-width="3.2" stroke-linecap="round"/><circle cx="17" cy="10" r="8.8" fill="#fff" stroke="#4a80bb" stroke-width="2"/></svg>
<div class="t" style="left:1085.72px;top:97.00px;font-size:12px;line-height:16px;letter-spacing:0.040px;color:#363636;">Найти и</div>
<div class="t" style="left:1077.97px;top:113.00px;font-size:12px;line-height:16px;letter-spacing:-0.286px;color:#363636;">выделить</div>
<svg class="i" style="left:1133px;top:119px" width="5" height="3" viewBox="0 0 5 3"><path d="M0 0H5L2.5 3Z" fill="#6a6a6a"/></svg>
<div class="nbox" style="left:5px;top:159px;width:102px;height:26px"></div>
<div class="t" style="left:11.88px;top:164.50px;font-size:13px;line-height:16px;letter-spacing:-0.455px;color:#262626;">O15</div>
<svg class="i" style="left:93px;top:169px" width="7" height="4" viewBox="0 0 7 4"><path d="M0 0H7L3.5 4Z" fill="#777"/></svg>
<div class="abs" style="left:121px;top:167px;width:2px;height:2px;background:#b4b4b4"></div>
<div class="abs" style="left:121px;top:171px;width:2px;height:2px;background:#b4b4b4"></div>
<div class="abs" style="left:121px;top:175px;width:2px;height:2px;background:#b4b4b4"></div>
<div class="nbox" style="left:137px;top:159px;width:110px;height:26px"></div>
<svg class="i" style="left:150px;top:167px" width="12" height="11" viewBox="0 0 12 11"><path d="M1 0.8L11 10M11 0.8L1 10" stroke="#c6c6c6" stroke-width="1.9" fill="none"/></svg>
<svg class="i" style="left:186px;top:167px" width="13" height="11" viewBox="0 0 13 11"><path d="M0.8 6.2L4.6 9.8L12.2 0.8" stroke="#c6c6c6" stroke-width="2.3" fill="none"/></svg>
<div class="t" style="left:222px;top:161px;font-family:'Liberation Serif',serif;font-style:italic;font-weight:bold;font-size:15px;line-height:20px;color:#555;letter-spacing:0px">f<span style="font-size:11.5px">x</span></div>
<div class="nbox" style="left:250px;top:159px;width:1111px;height:26px"></div>
<svg class="i" style="left:1349px;top:169px" width="8" height="5" viewBox="0 0 8 5"><path d="M0.7 0.7L4 4L7.3 0.7" stroke="#555" stroke-width="1.7" fill="none"/></svg>
<div id="sheet">
<div class="corner"><svg width="8" height="8" viewBox="0 0 8 8"><path d="M8 0V8H0Z" fill="#bdbdbd"/></svg></div>
<div class="ch" style="left:26px;width:151px">A</div>
<div class="ch" style="left:177px;width:151px">B</div>
<div class="ch" style="left:328px;width:84px">C</div>
<div class="ch" style="left:412px;width:151px">D</div>
<div class="ch" style="left:563px;width:151px">E</div>
<div class="ch" style="left:714px;width:151px">F</div>
<div class="ch" style="left:865px;width:151px">G</div>
<div class="ch" style="left:1016px;width:151px">H</div>
<div class="ch" style="left:1167px;width:151px">I</div>
<div class="ch" style="left:1318px;width:26px;border-right:0"></div>
<div class="rh" style="top:212px">1</div>
<div class="rh" style="top:233px">2</div>
<div class="rh" style="top:254px">3</div>
<div class="rh" style="top:275px">4</div>
<div class="rh" style="top:296px">5</div>
<div class="rh" style="top:317px">6</div>
<div class="rh" style="top:338px">7</div>
<div class="rh" style="top:359px">8</div>
<div class="rh" style="top:380px">9</div>
<div class="rh" style="top:401px">10</div>
<div class="rh" style="top:422px">11</div>
<div class="rh" style="top:443px">12</div>
<div class="rh" style="top:464px">13</div>
<div class="rh" style="top:485px">14</div>
<div class="rh sel" style="top:506px">15</div>
<div class="rh" style="top:527px">16</div>
<div class="rh" style="top:548px">17</div>
<div class="rh" style="top:569px">18</div>
<div class="rh" style="top:590px">19</div>
<div class="rh" style="top:611px">20</div>
<div class="rh" style="top:632px">21</div>
<div class="rh" style="top:653px">22</div>
<div class="rhb" style="top:674px"></div>
<div id="cells">
<div class="hl fr" style="top:232px"></div>
<div class="hl" style="top:253px"></div>
<div class="hl" style="top:274px"></div>
<div class="hl" style="top:295px"></div>
<div class="hl" style="top:316px"></div>
<div class="hl" style="top:337px"></div>
<div class="hl" style="top:358px"></div>
<div class="hl" style="top:379px"></div>
<div class="hl" style="top:400px"></div>
<div class="hl" style="top:421px"></div>
<div class="hl" style="top:442px"></div>
<div class="hl" style="top:463px"></div>
<div class="hl" style="top:484px"></div>
<div class="hl" style="top:505px"></div>
<div class="hl" style="top:526px"></div>
<div class="hl" style="top:547px"></div>
<div class="hl" style="top:568px"></div>
<div class="hl" style="top:589px"></div>
<div class="hl" style="top:610px"></div>
<div class="hl" style="top:631px"></div>
<div class="hl" style="top:652px"></div>
<div class="hl" style="top:673px"></div>
<div class="vl" style="left:176px"></div>
<div class="vl" style="left:327px"></div>
<div class="vl" style="left:411px"></div>
<div class="vl" style="left:562px"></div>
<div class="vl" style="left:713px"></div>
<div class="vl" style="left:864px"></div>
<div class="vl" style="left:1015px"></div>
<div class="vl" style="left:1166px"></div>
<div class="vl" style="left:1317px"></div>
<div class="c" style="top:212px;left:26px;width:150px">Отметка времени</div>
<div class="c" style="top:212px;left:177px;width:150px">Имя, фамилия</div>
<div class="c" style="top:212px;left:328px;width:83px">Телефон</div>
<div class="c" style="top:212px;left:412px;width:150px">Тип транспорта</div>
<div class="c" style="top:212px;left:563px;width:150px">Марка</div>
<div class="c" style="top:212px;left:714px;width:150px">Модель</div>
<div class="c" style="top:212px;left:865px;width:150px">Год выпуска</div>
<div class="c" style="top:212px;left:1016px;width:150px">Место базирования транспорта</div>
<div class="c" style="top:212px;left:1167px;width:150px">Количество пассажирских мест</div>
<div class="c" style="top:212px;left:1318px;width:26px">Примечание</div>
<div class="c r d" style="top:233px;left:26px;width:150px">11.16.2018 14:37:44</div>
<div class="c" style="top:233px;left:177px;width:150px">Владимир Николаев</div>
<div class="c r n" style="top:233px;left:328px;width:83px">89834442063</div>
<div class="c" style="top:233px;left:412px;width:150px">легковой автомобиль</div>
<div class="c" style="top:233px;left:563px;width:150px">Ниссан</div>
<div class="c" style="top:233px;left:714px;width:150px">Кашкай</div>
<div class="c r n" style="top:233px;left:865px;width:150px">2018</div>
<div class="c" style="top:233px;left:1016px;width:150px">Красноярск</div>
<div class="c r n" style="top:233px;left:1167px;width:150px">4</div>
<div class="c" style="top:233px;left:1318px;width:26px">перегон</div>
<div class="c r d" style="top:254px;left:26px;width:150px">11.16.2018 15:25:28</div>
<div class="c" style="top:254px;left:177px;width:150px">Анатолий Вейс</div>
<div class="c r n" style="top:254px;left:328px;width:83px">89834556544</div>
<div class="c" style="top:254px;left:412px;width:150px">внедорожник</div>
<div class="c" style="top:254px;left:563px;width:150px">Тойота</div>
<div class="c" style="top:254px;left:714px;width:150px">Лэнд Круйзер</div>
<div class="c r n" style="top:254px;left:865px;width:150px">2015</div>
<div class="c" style="top:254px;left:1016px;width:150px">Иркутск</div>
<div class="c r n" style="top:254px;left:1167px;width:150px">8</div>
<div class="c" style="top:254px;left:1318px;width:26px">полный привод</div>
<div class="c r d" style="top:275px;left:26px;width:150px">11.19.2018 14:55:23</div>
<div class="c" style="top:275px;left:177px;width:150px">Геннадий Николаев</div>
<div class="c r n" style="top:275px;left:328px;width:83px">89642777775</div>
<div class="c" style="top:275px;left:412px;width:150px">легковой автомобиль</div>
<div class="c" style="top:275px;left:563px;width:150px">Тойота</div>
<div class="c" style="top:275px;left:714px;width:150px">Пробокс</div>
<div class="c r n" style="top:275px;left:865px;width:150px">2014</div>
<div class="c" style="top:275px;left:1016px;width:150px">Ангарск</div>
<div class="c r n" style="top:275px;left:1167px;width:150px">4</div>
<div class="c" style="top:275px;left:1318px;width:26px">полный привод</div>
</div>
</div>
<div class="abs" style="left:1348px;top:197px;width:15px;height:15px;background:#fff;border:1px solid #ababab"></div>
<svg class="i" style="left:1352px;top:202px" width="7" height="4" viewBox="0 0 7 4"><path d="M0 4H7L3.5 0Z" fill="#6a6a6a"/></svg>
<div class="abs" style="left:1348px;top:641px;width:15px;height:22px;background:#d8d8d8"></div>
<div class="abs" style="left:1348px;top:213px;width:15px;height:428px;background:#fff;border:1px solid #ababab"></div>
<div class="abs" style="left:1348px;top:663px;width:15px;height:15px;background:#fff;border:1px solid #ababab"></div>
<svg class="i" style="left:1352px;top:669px" width="7" height="4" viewBox="0 0 7 4"><path d="M0 0H7L3.5 4Z" fill="#6a6a6a"/></svg>
<div id="tabbar"></div>
<div class="abs" style="left:0;top:678px;width:1345px;height:1px;background:#9b9b9b"></div>
<div class="abs" style="left:100px;top:678px;width:159px;height:25px;background:#fff;border-left:1px solid #ababab;border-right:1px solid #ababab;border-bottom:2px solid #217346"></div>
<div class="t" style="left:112.27px;top:683.50px;font-size:13px;line-height:16px;letter-spacing:-0.017px;color:#217346;font-weight:bold;">Ответы на форму (1)</div>
<svg class="i" style="left:27px;top:688px" width="4" height="7" viewBox="0 0 4 7"><path d="M4 0V7L0 3.5Z" fill="#c4c4c4"/></svg>
<svg class="i" style="left:56px;top:688px" width="4" height="7" viewBox="0 0 4 7"><path d="M0 0V7L4 3.5Z" fill="#c4c4c4"/></svg>
<svg class="i" style="left:292px;top:684px" width="16" height="16" viewBox="0 0 16 16"><circle cx="8" cy="8" r="7.3" fill="none" stroke="#777" stroke-width="1"/><path d="M8 4V12M4 8H12" stroke="#666" stroke-width="1.6"/></svg>
<div class="abs" style="left:819px;top:687px;width:2px;height:2px;background:#b4b4b4"></div>
<div class="abs" style="left:819px;top:691px;width:2px;height:2px;background:#b4b4b4"></div>
<div class="abs" style="left:819px;top:695px;width:2px;height:2px;background:#b4b4b4"></div>
<div class="abs" style="left:851px;top:685px;width:476px;height:15px;background:#d8d8d8"></div>
<div class="abs" style="left:836px;top:685px;width:16px;height:15px;background:#fff;border:1px solid #ababab"></div>
<svg class="i" style="left:841px;top:689px" width="4" height="7" viewBox="0 0 4 7"><path d="M4 0V7L0 3.5Z" fill="#6a6a6a"/></svg>
<div class="abs" style="left:851px;top:685px;width:238px;height:15px;background:#fff;border:1px solid #ababab"></div>
<div class="abs" style="left:1327px;top:685px;width:15px;height:15px;background:#fff;border:1px solid #ababab"></div>
<svg class="i" style="left:1333px;top:689px" width="4" height="7" viewBox="0 0 4 7"><path d="M0 0V7L4 3.5Z" fill="#6a6a6a"/></svg>
<div id="status"></div>
<div class="t" style="left:6.72px;top:709.00px;font-size:12px;line-height:16px;letter-spacing:-0.220px;color:#444;">Готово</div>
<svg class="i" style="left:64px;top:710px" width="14" height="13" viewBox="0 0 14 13"><circle cx="3" cy="3" r="3" fill="#8a8a8a"/><path d="M7 1H13.5V3.2H7Z" fill="#7a7a7a"/><path d="M1.5 6.5V12.5H13V2" fill="none" stroke="#7a7a7a" stroke-width="1"/><path d="M3.5 6.5H5.5M7 6.5H9M10.2 6.5H12M3.5 8.5H5.5M7 8.5H9M10.2 8.5H12M3.5 10.5H5.5M7 10.5H9M10.2 10.5H12" stroke="#7a7a7a" stroke-width="1"/></svg>
<div class="abs" style="left:1074px;top:707px;width:38px;height:20px;background:#c8c8c8"></div>
<svg class="i" style="left:1086px;top:710px" width="13" height="13" viewBox="0 0 13 13"><path d="M0.5 0.5H12.5V12.5H0.5ZM4.5 0.5V12.5M8.5 0.5V12.5M0.5 4.5H12.5M0.5 8.5H12.5" fill="none" stroke="#6a6a6a"/></svg>
<svg class="i" style="left:1124px;top:710px" width="14" height="13" viewBox="0 0 14 13"><path d="M0.5 0.5H13.5V12.5H0.5Z" fill="none" stroke="#6a6a6a"/><path d="M3.5 3.5H10.5V10.5H3.5ZM5 5.5H9M5 7.5H9" fill="none" stroke="#6a6a6a"/></svg>
<svg class="i" style="left:1162px;top:710px" width="14" height="13" viewBox="0 0 14 13"><path d="M0.5 0.5H13.5V12.5H0.5Z" fill="none" stroke="#6a6a6a"/><path d="M4.5 0.5V7.5M0.5 7.5H9.5V0.5" fill="none" stroke="#6a6a6a"/></svg>
<div class="abs" style="left:1193px;top:715.5px;width:6px;height:2px;background:#555"></div>
<div class="abs" style="left:1203px;top:716px;width:100px;height:1px;background:#9a9a9a"></div>
<div class="abs" style="left:1251px;top:711px;width:4px;height:11px;background:#555"></div>
<svg class="i" style="left:1307px;top:713px" width="8" height="8" viewBox="0 0 8 8"><path d="M4 0V8M0 4H8" stroke="#555" stroke-width="2"/></svg>
<div class="t" style="left:1328.89px;top:709.00px;font-size:12px;line-height:16px;letter-spacing:-0.717px;color:#444;">100%</div>
</div>
</body></html>
